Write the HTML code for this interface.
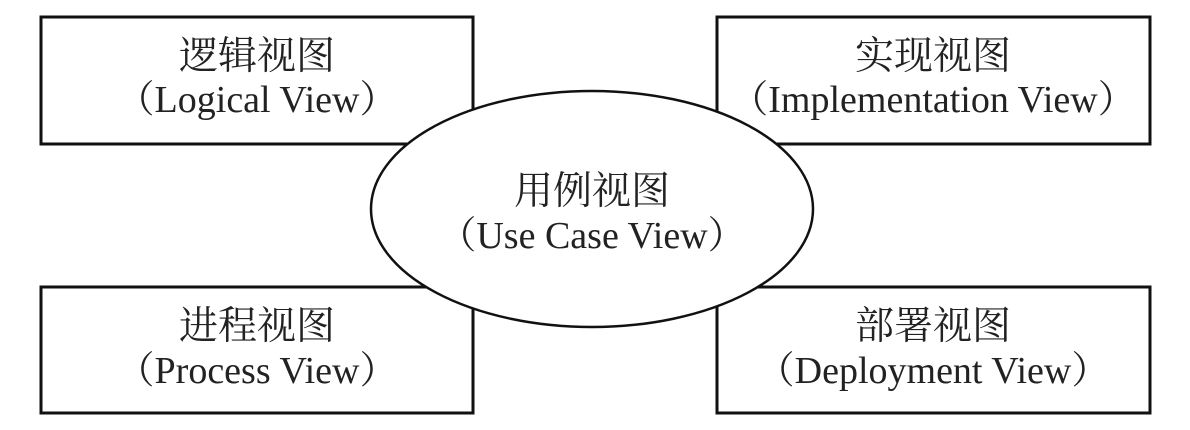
<!DOCTYPE html>
<html><head><meta charset="utf-8"><style>
html,body{margin:0;padding:0;background:#fff;}
svg{display:block;}
text{font-family:"Liberation Serif","Noto Serif CJK SC",serif;fill:#222;text-anchor:middle;}
.c{font-size:39px;}
.e{font-size:38px;}
</style></head><body>
<svg width="1190" height="430" viewBox="0 0 1190 430">
<g fill="#fff" stroke="#111" stroke-width="3">
<rect x="41" y="17" width="432" height="127"/>
<rect x="717" y="17" width="433" height="127"/>
<rect x="41" y="287" width="432" height="126"/>
<rect x="717" y="287" width="433" height="126"/>
<ellipse cx="592" cy="209" rx="221" ry="118" stroke-width="2.5"/>
</g>
<text class="c" x="257" y="69">逻辑视图</text>
<text class="e" x="257" y="112">（Logical View）</text>
<text class="c" x="933" y="69">实现视图</text>
<text class="e" x="933" y="112">（Implementation View）</text>
<text class="c" x="257" y="339">进程视图</text>
<text class="e" x="257" y="383">（Process View）</text>
<text class="c" x="933" y="339">部署视图</text>
<text class="e" x="933" y="383">（Deployment View）</text>
<text class="c" x="592" y="204">用例视图</text>
<text class="e" x="592" y="248">（Use Case View）</text>
</svg>
</body></html>
